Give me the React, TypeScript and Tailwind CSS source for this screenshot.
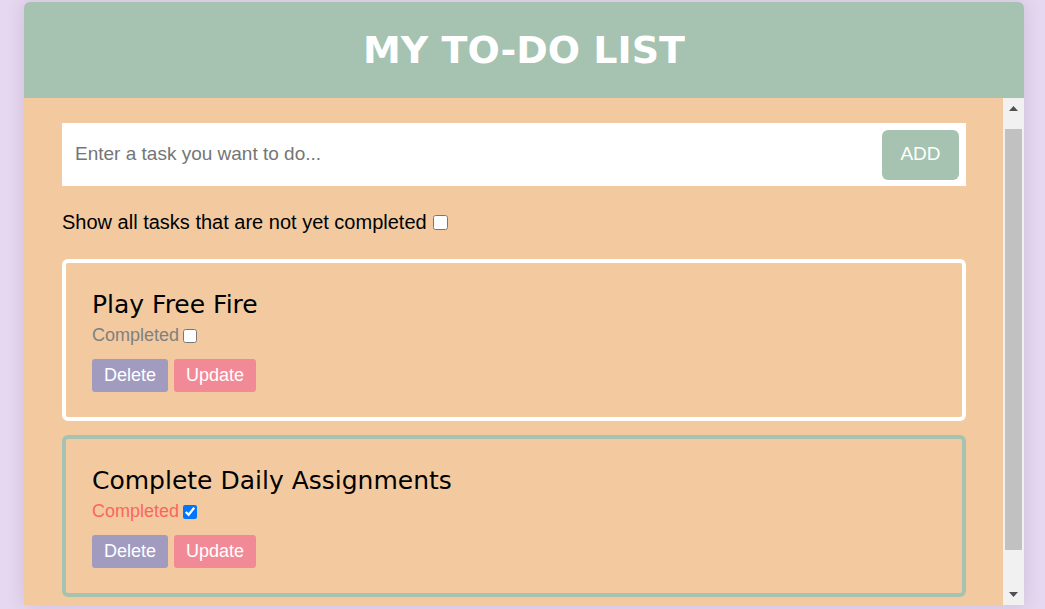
import { useState } from 'react';

type Task = { id: number; title: string; done: boolean };

const initialTasks: Task[] = [
  { id: 1, title: 'Play Free Fire', done: false },
  { id: 2, title: 'Complete Daily Assignments', done: true },
];

function TaskCard({ task, onToggle }: { task: Task; onToggle: (id: number) => void }) {
  return (
    <div
      className={`rounded-[6px] border-4 px-[26px] pt-[27px] pb-[25px] ${
        task.done ? 'border-[#a5c3b0]' : 'border-white'
      }`}
    >
      <h2 className="font-['DejaVu_Sans',Verdana,sans-serif] text-[25px] leading-[29px] text-black">
        {task.title}
      </h2>
      <div className="mt-[6px] flex h-[21px] items-center">
        <span
          className={`text-[18px] leading-[21px] ${task.done ? 'text-[#f9665e]' : 'text-[#808080]'}`}
        >
          Completed
        </span>
        <input
          type="checkbox"
          checked={task.done}
          onChange={() => onToggle(task.id)}
          className="ml-[4px] h-[14px] w-[14px] accent-[#0075ff]"
        />
      </div>
      <div className="mt-[13px] flex gap-[6px]">
        <button className="h-[33px] rounded-[3px] bg-[#a09bbf] px-[12px] text-[18px] text-white">
          Delete
        </button>
        <button className="h-[33px] rounded-[3px] bg-[#f18a96] px-[12px] text-[18px] text-white">
          Update
        </button>
      </div>
    </div>
  );
}

// classic scrollbar look (the page hides native ones)
function FakeScrollbar() {
  return (
    <div className="flex w-[21px] flex-col bg-[#f1f1f1]">
      <div className="flex h-[21px] items-center justify-center">
        <svg width="9" height="5" viewBox="0 0 9 5">
          <polygon points="4.5,0 9,5 0,5" fill="#505050" />
        </svg>
      </div>
      <div className="flex-1 px-[2px] pt-[10px]">
        <div className="h-[421px] bg-[#c1c1c1]" />
      </div>
      <div className="flex h-[21px] items-center justify-center">
        <svg width="9" height="5" viewBox="0 0 9 5">
          <polygon points="0,0 9,0 4.5,5" fill="#505050" />
        </svg>
      </div>
    </div>
  );
}

export default function App() {
  const [tasks, setTasks] = useState<Task[]>(initialTasks);
  const [onlyOpen, setOnlyOpen] = useState(false);

  const toggle = (id: number) =>
    setTasks((prev) => prev.map((t) => (t.id === id ? { ...t, done: !t.done } : t)));

  const visible = onlyOpen ? tasks.filter((t) => !t.done) : tasks;

  return (
    <div className="h-[609px] w-full overflow-hidden bg-[#e6d8f0] pt-[2px] font-['Liberation_Sans',Arial,sans-serif]">
      <div className="ml-[24px] w-[1000px] overflow-hidden rounded-t-[6px] shadow-[0_0_18px_rgba(90,60,120,0.18)]">
        {/* Header */}
        <div className="flex h-[96px] items-center justify-center bg-[#a5c3b0]">
          <h1 className="font-['DejaVu_Sans',Verdana,sans-serif] text-[38px] font-bold text-white">
            MY TO-DO LIST
          </h1>
        </div>

        {/* Body */}
        <div className="flex h-[507px] bg-[#f3caa0]">
          <div className="flex-1 overflow-y-auto pt-[25px] pb-[60px] pl-[38px] [scrollbar-width:none]">
            <div className="w-[904px]">
              <div className="flex h-[63px] items-center bg-white pl-[13px] pr-[7px]">
                <input
                  type="text"
                  placeholder="Enter a task you want to do..."
                  className="min-w-0 flex-1 bg-transparent text-[19px] text-black outline-none placeholder:text-[#757575]"
                />
                <button className="h-[50px] w-[77px] rounded-[6px] bg-[#a5c3b0] text-[19px] text-white">
                  ADD
                </button>
              </div>

              <div className="mt-[25px] flex h-[23px] items-center text-[20px] leading-[23px] text-black">
                <span>Show all tasks that are not yet completed</span>
                <input
                  type="checkbox"
                  checked={onlyOpen}
                  onChange={() => setOnlyOpen(!onlyOpen)}
                  className="ml-[6px] h-[15px] w-[15px]"
                />
              </div>

              <div className="mt-[25px] flex flex-col gap-[14px]">
                {visible.map((t) => (
                  <TaskCard key={t.id} task={t} onToggle={toggle} />
                ))}
              </div>
            </div>
          </div>
          <FakeScrollbar />
        </div>
      </div>
    </div>
  );
}
